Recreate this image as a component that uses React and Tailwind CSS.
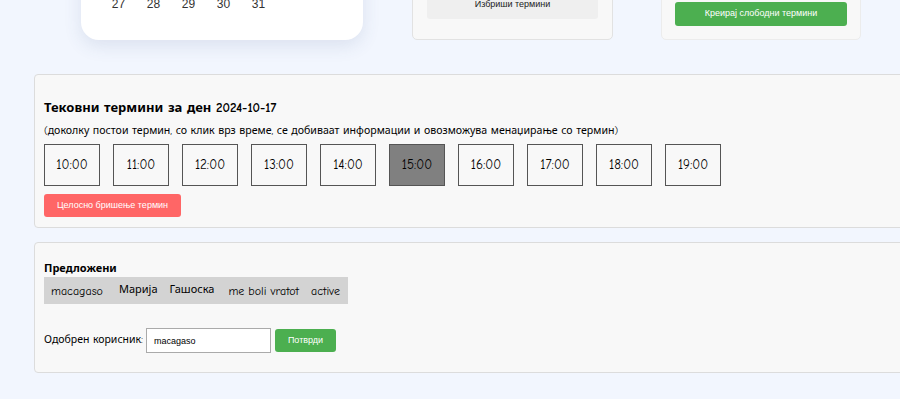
import React from 'react';

const days = ['Нед', 'Пон', 'Вто', 'Сре', 'Чет', 'Пет', 'Саб'];
// October 2024 starts on Tuesday (Sunday-first grid)
const cells = [null, null, ...Array.from({ length: 31 }, (_, i) => i + 1)];

const times = ['10:00', '11:00', '12:00', '13:00', '14:00', '15:00', '16:00', '17:00', '18:00', '19:00'];

const comic = "[font-family:'Comic_Neue','Noto_Sans',sans-serif]";
const arial = "[font-family:'Liberation_Sans',Arial,sans-serif]";

export default function App() {
  return (
    <div className={`min-h-[399px] w-full overflow-hidden bg-[#f2f6fe] ${comic}`}>
      <div className="flex items-end pl-[81px] -mt-[137px]">
        <div className="w-[282px] rounded-[18px] bg-white px-[20px] pt-[20px] pb-[25px] shadow-[0_6px_18px_rgba(60,80,130,0.12)]">
          <div className={`grid grid-cols-7 w-[245px] text-center text-[12px] text-[#333] ${arial}`}>
            {days.map((d) => (
              <div key={d} className="h-[22px] leading-[22px] font-bold">{d}</div>
            ))}
            {cells.map((c, i) => (
              <div key={i} className="h-[22px] leading-[22px]">{c ?? ''}</div>
            ))}
          </div>
        </div>

        <div className="ml-[49px] w-[201px] rounded-[5px] border border-[#e2e2e2] bg-[#f8f8f8] px-[14px] pb-[20px] pt-[14px]">
          <button className={`w-full h-[28px] rounded-[3px] bg-[#efefef] text-[9px] text-[#222] ${arial}`}>
            Избриши термини
          </button>
        </div>

        <div className="ml-[48px] w-[200px] rounded-[5px] border border-[#ececec] bg-[#f8f8f8] px-[13px] pb-[13px] pt-[14px]">
          <button className={`w-full h-[24px] rounded-[3px] bg-[#4caf50] text-[9px] text-white ${arial}`}>
            Креирај слободни термини
          </button>
        </div>
      </div>

      <div className="mt-[34px] ml-[34px] w-[900px] rounded-[4px] border border-[#dcdcdc] bg-[#f8f8f8] px-[9px] pt-[23px] pb-[10px]">
        <h3 className="text-[13px] font-bold leading-[20px] text-black">Тековни термини за ден 2024-10-17</h3>
        <p className="mt-[5px] text-[10.6px] leading-[16px] text-black">
          (доколку постои термин, со клик врз време, се добиваат информации и овозможува менаџирање со термин)
        </p>
        <div className="mt-[5px] flex gap-[13px]">
          {times.map((t) => (
            <button
              key={t}
              className={`h-[42px] w-[56px] border border-[#555] text-[13px] text-black ${comic} ${t === '15:00' ? 'bg-[#808080]' : 'bg-[#f8f8f8]'}`}
            >
              {t}
            </button>
          ))}
        </div>
        <button className={`mt-[8px] h-[23px] w-[137px] rounded-[3px] bg-[#ff6666] text-[9px] text-white ${arial}`}>
          Целосно бришење термин
        </button>
      </div>

      <div className="mt-[14px] ml-[34px] w-[900px] rounded-[4px] border border-[#dcdcdc] bg-[#f8f8f8] px-[9px] pt-[18px] pb-[19px]">
        <div className="text-[11px] font-bold leading-[16px] text-black">Предложени</div>
        <div className="inline-flex h-[27px] items-center bg-[#d3d3d3] pl-[7px] pr-[8px] text-[11px] text-black">
          <span className="w-[46px] text-[12px]">macagaso</span>
          <span className="ml-[22px]">Марија</span>
          <span className="ml-[12px]">Гашоска</span>
          <span className="ml-[14px] text-[12px]">me boli vratot</span>
          <span className="ml-[12px] text-[12px]">active</span>
        </div>
        <div className="mt-[24px] flex items-center text-[10.5px] text-black">
          <span>Одобрен корисник:</span>
          <input
            readOnly
            value="macagaso"
            className={`ml-[3px] h-[25px] w-[125px] border border-[#aaa] bg-white px-[7px] text-[9px] text-black outline-none ${arial}`}
          />
          <button className={`ml-[4px] h-[23px] w-[61px] rounded-[3px] bg-[#4caf50] text-[9px] text-white ${arial}`}>
            Потврди
          </button>
        </div>
      </div>
    </div>
  );
}
